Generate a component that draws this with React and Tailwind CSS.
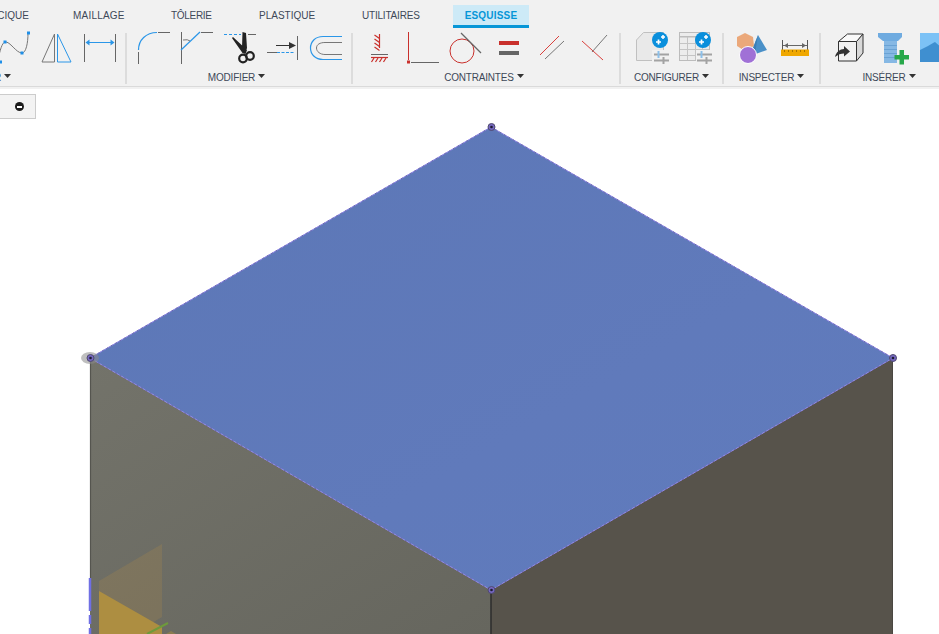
import React from 'react';

function Slot({ x, children }) {
  return (
    <svg width="43" height="36" viewBox={`${x} 30 43 36`} className="block shrink-0 overflow-hidden">
      {children}
    </svg>
  );
}

function Label({ children, className = '' }) {
  return (
    <div className={`flex h-[22px] items-center justify-center gap-[3px] text-[10px] tracking-[-0.2px] text-[#3d4858] ${className}`}>
      <span>{children}</span>
      <svg width="7" height="4" viewBox="0 0 7 4" className="mb-[2px]">
        <path d="M0 0h7L3.500 4z" fill="#333" />
      </svg>
    </div>
  );
}

function Separator() {
  return <div className="mt-[3px] h-[51px] w-[2px] shrink-0 bg-[#dcdcdc]" />;
}

function Sliders({ x }) {
  return (
    <g>
      <path d={`M${x} 54.500h15M${x} 60.500h15`} stroke="#a3a3a3" strokeWidth="2" />
      <path d={`M${x + 4.500} 51v7`} stroke="#8cc0ea" strokeWidth="2" />
      <path d={`M${x + 9.500} 57v7`} stroke="#a3a3a3" strokeWidth="2" />
    </g>
  );
}

function Sparkle({ cx }) {
  return (
    <g>
      <circle cx={cx} cy="40" r="8" fill="#0a8fdc" />
      <path d={`M${cx - 4} 42h5M${cx - 1.500} 39.500v5`} stroke="#fff" strokeWidth="1.700" />
      <path d={`M${cx + 1} 37h4M${cx + 3} 35v4`} stroke="#fff" strokeWidth="1.500" />
    </g>
  );
}

export default function App() {
  return (
    <div className="flex h-[634px] w-[939px] flex-col overflow-hidden bg-white font-['Liberation_Sans',Arial,sans-serif]">
      <header className="shrink-0 bg-[#f1f1f1]">
        <div className="h-[87px] border-b border-[#dadada]">
          {/* tabs */}
          <div className="flex h-[28px] items-start pt-[5px] text-[10px] text-[#3d4858]">
            <span className="ml-[-3px] mt-[5px] w-[32px] text-right leading-[12px]">CIQUE</span>
            <span className="ml-[44px] mt-[5px] w-[52px] leading-[12px] tracking-[0.2px]">MAILLAGE</span>
            <span className="ml-[46px] mt-[5px] w-[41px] whitespace-nowrap leading-[12px] tracking-[-0.3px]">TÔLERIE</span>
            <span className="ml-[47px] mt-[5px] w-[56px] leading-[12px]">PLASTIQUE</span>
            <span className="ml-[47px] mt-[5px] w-[58px] whitespace-nowrap leading-[12px] tracking-[-0.2px]">UTILITAIRES</span>
            <span className="ml-[33px] flex h-[23px] w-[76px] items-start justify-center border-b-[3px] border-[#0696d7] bg-[#cdeaf7] pt-[5px] text-[10px] font-bold leading-[12px] tracking-[0.2px] text-[#0696d7]">
              ESQUISSE
            </span>
          </div>

          {/* ribbon */}
          <div className="ml-[-150px] flex pt-[2px]">
            <div className="w-[275px] shrink-0">
              <div className="flex justify-end pr-[3px]">
                <Slot x={-7}>
                  <path d="M-2 60C0 50 2 43 5 42c5-1 11 11 17 11 4 0 6-10 6-20" fill="none" stroke="#777" strokeWidth="1" />
                  <path d="M-1 60.500h3v3h-3zM3.500 40.500h3v3h-3zM20.500 51.500h3v3h-3zM27 31.500h3v3h-3z" fill="#1f8fe8" />
                </Slot>
                <Slot x={36}>
                  <path d="M54.500 34L42 62h12.500z" fill="none" stroke="#777" strokeWidth="1" />
                  <path d="M57.500 34v28H71z" fill="none" stroke="#2a96e8" strokeWidth="1" />
                </Slot>
                <Slot x={79}>
                  <path d="M84.500 34v28M115.500 34v28" stroke="#666" strokeWidth="1" />
                  <path d="M88 42.500h24" stroke="#2a96e8" strokeWidth="1" />
                  <path d="M85.500 42.500l4-3v6zM114.500 42.500l-4-3v6z" fill="#2a96e8" />
                </Slot>
              </div>
              <Label className="pl-[3px]">CRÉER</Label>
            </div>
            <Separator />
            <div className="w-[224px] shrink-0">
              <div className="flex pl-[5px]">
                <Slot x={132}>
                  <path d="M138.500 50C138.500 40 146 32.500 157 32.500" fill="none" stroke="#2a96e8" strokeWidth="1.200" />
                  <path d="M138.500 52v12M158 32.500h12" stroke="#666" strokeWidth="1" />
                </Slot>
                <Slot x={175}>
                  <path d="M181.500 32v32M201 32.500h12" stroke="#666" strokeWidth="1" />
                  <path d="M181 50l19-18" stroke="#2a96e8" strokeWidth="1.200" />
                  <path d="M183 40q5-1 7 1" fill="none" stroke="#777" strokeWidth="1" />
                </Slot>
                <Slot x={218}>
                  <path d="M224 34.500h17" stroke="#2a96e8" strokeWidth="1" strokeDasharray="3 2" />
                  <path d="M248 34.500h8" stroke="#666" strokeWidth="1" />
                  <path d="M242.500 32l3.500 1 1 15-2 6-3-6zM232 38l1-1 14 13-1.500 4-3-1z" fill="#222" />
                  <circle cx="243" cy="58.500" r="3.800" fill="none" stroke="#222" strokeWidth="2.200" />
                  <circle cx="250" cy="56" r="3.800" fill="none" stroke="#222" strokeWidth="2.200" />
                </Slot>
                <Slot x={261}>
                  <path d="M267 52.500h10" stroke="#666" strokeWidth="1" />
                  <path d="M277 52.500h18" stroke="#2a96e8" strokeWidth="1" strokeDasharray="3 1.500" />
                  <path d="M276 45.500h14" stroke="#333" strokeWidth="1" />
                  <path d="M296 45.500l-7-3.500v7z" fill="#333" />
                  <path d="M297.500 36v24" stroke="#666" strokeWidth="1" />
                </Slot>
                <Slot x={304}>
                  <path d="M342 36.500h-19C315 36.500 310.500 42 310.500 48S315 59.500 323 59.500h19" fill="none" stroke="#2a96e8" strokeWidth="1.200" />
                  <path d="M342 42.500h-17c-5 0-8.500 2-8.500 5.500s3.500 6.500 8.500 6.500h17" fill="none" stroke="#777" strokeWidth="1" />
                </Slot>
              </div>
              <Label className="pr-[5px]">MODIFIER</Label>
            </div>
            <Separator />
            <div className="w-[266px] shrink-0">
              <div className="flex pl-[5px]">
                <Slot x={358}>
                  <path d="M379.500 34v14" stroke="#c9302c" strokeWidth="1.200" />
                  <path d="M374.500 35l5 3.500M374.500 39l5 3.500M374.500 43l5 3.500M374.500 47l5 3.500" stroke="#c9302c" strokeWidth="1.200" />
                  <path d="M371 54.500h17" stroke="#666" strokeWidth="1" />
                  <path d="M371 57.500h17" stroke="#c9302c" strokeWidth="1.200" />
                  <path d="M374 58l-2.500 4M378 58l-2.500 4M382 58l-2.500 4M386 58l-2.500 4" stroke="#c9302c" strokeWidth="1.200" />
                </Slot>
                <Slot x={401}>
                  <path d="M408.500 32v28" stroke="#c9302c" strokeWidth="1" />
                  <path d="M407 60.500h3v3h-3z" fill="#c9302c" />
                  <path d="M411 62.500h28" stroke="#666" strokeWidth="1" />
                </Slot>
                <Slot x={444}>
                  <circle cx="462" cy="51" r="12" fill="none" stroke="#c9302c" strokeWidth="1" />
                  <path d="M461 33l20 20" stroke="#666" strokeWidth="1.200" />
                </Slot>
                <Slot x={487}>
                  <path d="M499 41h20v4h-20z" fill="#c9302c" />
                  <path d="M499 51h20v4h-20z" fill="#666" />
                </Slot>
                <Slot x={530}>
                  <path d="M540 55l19-19" stroke="#d9403c" strokeWidth="1" />
                  <path d="M545 59l19-18" stroke="#777" strokeWidth="1" />
                </Slot>
                <Slot x={573}>
                  <path d="M582 41l21 19" stroke="#d9403c" strokeWidth="1" />
                  <path d="M592 52l15-17" stroke="#777" strokeWidth="1" />
                </Slot>
              </div>
              <Label className="pr-[4px]">CONTRAINTES</Label>
            </div>
            <Separator />
            <div className="w-[101px] shrink-0">
              <div className="flex pl-[9px]">
                <Slot x={630}>
                  <path d="M636.500 60.500V40l7-7.500h20v28z" fill="#e9e9e9" stroke="#c0c0c0" strokeWidth="1" />
                  <rect x="652" y="50" width="17" height="14" fill="#f1f1f1" />
                  <Sliders x={654} />
                  <Sparkle cx={660} />
                </Slot>
                <Slot x={673}>
                  <rect x="679.500" y="32.500" width="30" height="28" fill="#ececec" stroke="#bcbcbc" />
                  <path d="M680 36h29v1.500h-29z" fill="#bcbcbc" />
                  <path d="M680 43.500h29M680 49.500h29M680 55.500h29M687.500 37v23M695.500 37v23M702.500 37v23" stroke="#c4c4c4" strokeWidth="1" />
                  <rect x="696" y="50" width="16" height="14" fill="#f1f1f1" />
                  <Sliders x={697} />
                  <Sparkle cx={703} />
                </Slot>
              </div>
              <Label>CONFIGURER</Label>
            </div>
            <Separator />
            <div className="w-[95px] shrink-0">
              <div className="flex pl-[6px]">
                <Slot x={730}>
                  <path d="M745 33l8 4 1 9-9 5-8-5v-9z" fill="#eba87a" />
                  <path d="M758 35l9 15-17 6z" fill="#4a90c8" />
                  <path d="M758 35l-3 19-5 2z" fill="#3d7fb6" />
                  <circle cx="748" cy="55" r="8.500" fill="#a071d6" stroke="#fff" strokeWidth="1" />
                </Slot>
                <Slot x={773}>
                  <path d="M782 45.500h26" stroke="#666" strokeWidth="1" />
                  <path d="M782.500 40v10M807.500 40v10" stroke="#555" strokeWidth="1" />
                  <path d="M784 45.500l4-2.500v5zM806 45.500l-4-2.500v5z" fill="#666" />
                  <rect x="781" y="49.500" width="28" height="6.500" fill="#f0a800" />
                  <path d="M784.500 50v2M788.500 50v2M792.500 50v2M796.500 50v2M800.500 50v2M804.500 50v2" stroke="#a87400" strokeWidth="1" />
                </Slot>
              </div>
              <Label>INSPECTER</Label>
            </div>
            <Separator />
            <div className="w-[130px] shrink-0">
              <div className="flex pl-[8px]">
                <Slot x={829}>
                  <path d="M838.500 41.500l9-7.500h15.500l-6 7.500z" fill="#fafafa" stroke="#333" strokeWidth="1" />
                  <path d="M838.500 41.500h18v19.500h-18z" fill="#f2f2f2" stroke="#333" strokeWidth="1" />
                  <path d="M856.500 41.500l6.500-7.500v19l-6.500 8z" fill="#d9d9d9" stroke="#333" strokeWidth="1" />
                  <path d="M835 57c1-5 5-8 9-8v-3l6 5.500-6 5v-3c-3 0-6 1-9 3.500z" fill="#333" />
                </Slot>
                <Slot x={872}>
                  <path d="M878 33h24v4l-4 4h-15l-5-4z" fill="#6fabe0" />
                  <rect x="884" y="41" width="13" height="22" fill="#86b8e4" />
                  <path d="M884 45.500h13M884 49.500h13M884 53.500h13M884 57.500h13" stroke="#6aa2d4" strokeWidth="1" />
                  <path d="M899.500 50h4.500v5h5v4.500h-5v5h-4.500v-5h-5v-4.500h5z" fill="#27a84a" />
                </Slot>
                <Slot x={915}>
                  <rect x="920" y="33" width="24" height="29" fill="#7cc2f6" />
                  <path d="M920 50l8-4c3-2 5-3 7-4l9 8v12h-24z" fill="#3f8fd0" />
                </Slot>
              </div>
              <Label className="pl-[6px]">INSÉRER</Label>
            </div>
          </div>
        </div>
        <div className="h-[2px]" />
      </header>

      <main className="relative min-h-0 flex-1">
        {/* model in the canvas */}
        <svg className="block h-full w-full" viewBox="0 89 939 545">
          <defs>
            <linearGradient id="topFace" x1="0" y1="0" x2="1" y2="1">
              <stop offset="0" stopColor="#5c77b6" />
              <stop offset="0.6" stopColor="#607abb" />
              <stop offset="1" stopColor="#5f7bbd" />
            </linearGradient>
            <linearGradient id="leftFace" x1="0" y1="0" x2="1" y2="1">
              <stop offset="0" stopColor="#73736a" />
              <stop offset="1" stopColor="#66665e" />
            </linearGradient>
          </defs>
          <path d="M90 358L491 590V634H90z" fill="url(#leftFace)" />
          <path d="M893 358L491 590V634H893z" fill="#57534b" />
          <path d="M491 127L893 358L491 590L90 358z" fill="url(#topFace)" />
          <path d="M491 590V634" stroke="#2c2c2c" strokeWidth="1.500" />
          <path d="M90.500 358V578" stroke="#55554f" strokeWidth="1.200" />
          <path d="M892.500 358V634" stroke="#4a4741" strokeWidth="1" />
          <path d="M491 127L893 358L491 590L90 358z" fill="none" stroke="#8d84e6" strokeWidth="1" />
          <path d="M491 127L893 358L491 590L90 358z" fill="none" stroke="#4a4a78" strokeOpacity="0.5" strokeWidth="1" strokeDasharray="2 3" />

          {/* origin planes */}
          <path d="M99 581L162 544V617L99 654z" fill="#d09a3c" fillOpacity="0.17" />
          <path d="M99 591L162 627V634H99z" fill="#ad8e41" />
          <path d="M147 634L168 623" stroke="#6e9a3c" strokeWidth="2" />
          <path d="M166 634l5-3 5 3z" fill="#8a7c50" />
          <path d="M90 578v33M90 615v9M90 628v6" stroke="#6f6fe4" strokeWidth="2.500" />

          {/* sketch points */}
          <ellipse cx="90" cy="358" rx="9" ry="6" fill="#8a8a8a" fillOpacity="0.55" />
          <g fill="#7567c0" stroke="#4f4a70" strokeWidth="1">
            <circle cx="90.500" cy="358" r="3.500" />
            <circle cx="491.500" cy="127" r="3.500" />
            <circle cx="491.500" cy="590" r="3.500" />
            <circle cx="893" cy="358" r="3.500" />
          </g>
          <g fill="#1c1c30">
            <circle cx="90.500" cy="358" r="1.300" />
            <circle cx="491.500" cy="127" r="1.300" />
            <circle cx="491.500" cy="590" r="1.300" />
            <circle cx="893" cy="358" r="1.300" />
          </g>
        </svg>

        <div className="absolute left-[-1px] top-[5px] flex h-[25px] w-[37px] items-center justify-end border border-[#cccccc] bg-[#f3f3f3] pr-[11px]">
          <span className="flex h-[9px] w-[9px] items-center justify-center rounded-full bg-[#1c1c1c]">
            <span className="h-[2px] w-[5px] bg-white" />
          </span>
        </div>
      </main>
    </div>
  );
}
